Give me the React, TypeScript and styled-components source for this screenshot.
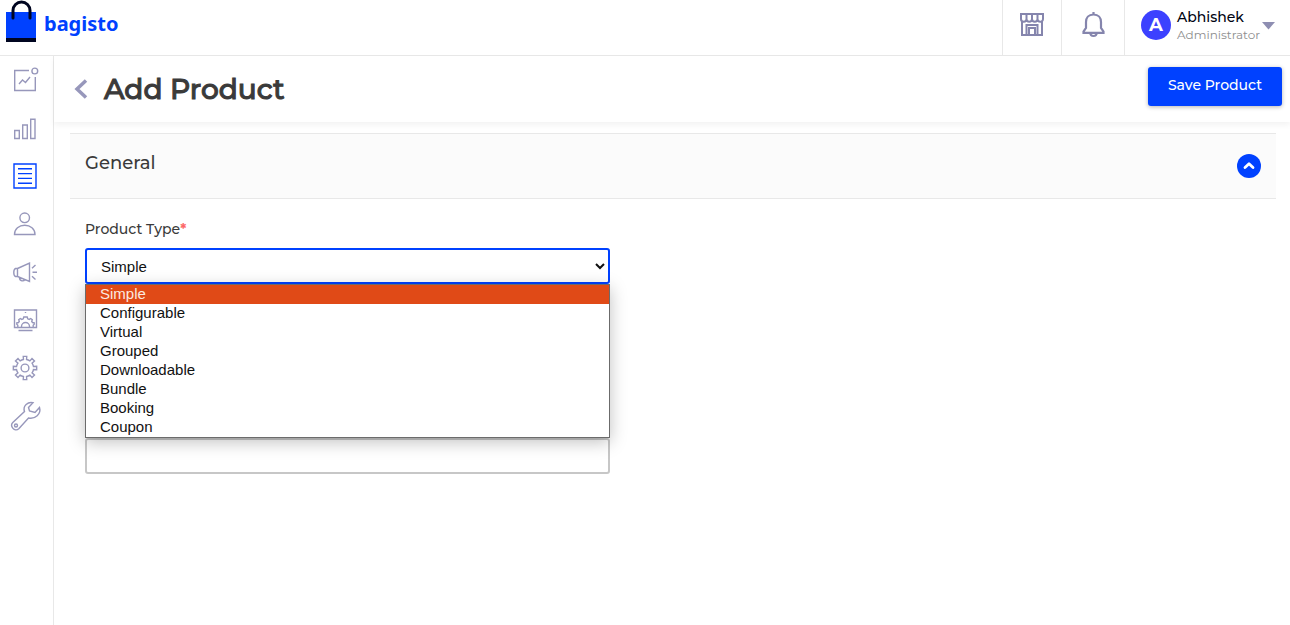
import React from "react";
import styled, { createGlobalStyle } from "styled-components";

const GlobalStyle = createGlobalStyle`
  *, *::before, *::after { box-sizing: border-box; }
  body {
    margin: 0;
    background: #fff;
    color: #3a3a3a;
    font-family: Montserrat, Inter, "Liberation Sans", sans-serif;
  }
  button { font-family: inherit; cursor: pointer; }
  a { text-decoration: none; color: inherit; }
`;

const Page = styled.div`
  display: flex;
  flex-direction: column;
  min-height: 100vh;
`;

const TopBar = styled.header`
  display: flex;
  justify-content: space-between;
  height: 56px;
  border-bottom: 1px solid #e8e8e8;
`;

const Brand = styled.a`
  display: flex;
  align-items: flex-start;
  gap: 8px;
  padding: 0 6px;
  color: #0041ff;
`;

const BrandName = styled.span`
  font-family: "Noto Sans", "Open Sans", sans-serif;
  font-size: 20px;
  font-weight: 700;
  line-height: 28px;
  padding-top: 10px;
`;

const TopActions = styled.div`
  display: flex;
`;

const TopButton = styled.button<{ $width: number }>`
  display: flex;
  justify-content: center;
  width: ${(p) => p.$width}px;
  padding: 11px 0 0;
  border: 0;
  border-left: 1px solid #e8e8e8;
  background: none;
  color: #8585ad;
`;

const Profile = styled.button`
  display: flex;
  align-items: flex-start;
  padding: 8px 15px 0 16px;
  border: 0;
  border-left: 1px solid #e8e8e8;
  background: none;
  text-align: left;
`;

const Avatar = styled.span`
  width: 30px;
  height: 30px;
  margin: 2px 6px 0 0;
  border-radius: 50%;
  background: #3c41ff;
  color: #fff;
  font-size: 18px;
  font-weight: 700;
  line-height: 30px;
  text-align: center;
`;

const ProfileText = styled.span`
  display: flex;
  flex-direction: column;
  width: 85px;
`;

const ProfileName = styled.span`
  color: #000311;
  font-size: 14px;
  font-weight: 500;
  line-height: 18px;
`;

const ProfileRole = styled.span`
  color: #8e8e8e;
  font-size: 12px;
  line-height: 18px;
`;

const Caret = styled.svg`
  margin-top: 14px;
`;

const Body = styled.div`
  display: flex;
  flex: 1;
`;

const SideNav = styled.nav`
  display: flex;
  flex: none;
  flex-direction: column;
  align-items: center;
  gap: 16px;
  width: 54px;
  padding: 8px 6px 0 0;
  border-right: 1px solid #e8e8e8;
`;

const NavLink = styled.a<{ $active?: boolean }>`
  display: flex;
  width: 32px;
  height: 32px;
  color: ${(p) => (p.$active ? "#0041ff" : "#9797bb")};
`;

const Content = styled.main`
  flex: 1;
  min-width: 0;
`;

const TitleBar = styled.div`
  display: flex;
  align-items: flex-start;
  justify-content: space-between;
  height: 66px;
  padding: 11px 8px 0 20px;
  box-shadow: 0 3px 6px rgba(0, 0, 0, 0.05);
`;

const TitleGroup = styled.div`
  display: flex;
  align-items: center;
  gap: 16px;
  height: 44px;
`;

const BackLink = styled.a`
  display: flex;
  color: #9797bb;
`;

const Title = styled.h1`
  margin: 0;
  font-size: 28px;
  font-weight: 500;
  line-height: 40px;
  -webkit-text-stroke: 1px currentColor;
`;

const PrimaryButton = styled.button`
  height: 39px;
  padding: 0 20px 2px;
  border: 0;
  border-radius: 3px;
  background: #0041ff;
  box-shadow: 0 1px 4px rgba(0, 0, 0, 0.3);
  color: #fff;
  font-size: 14px;
  font-weight: 500;
  line-height: 37px;
`;

const Panel = styled.section`
  margin: 11px 14px 0 16px;
`;

const PanelHeader = styled.div`
  display: flex;
  align-items: center;
  justify-content: space-between;
  height: 66px;
  padding: 0 15px;
  border: solid #e8e8e8;
  border-width: 1px 0;
  background: #fbfbfb;
`;

const PanelTitle = styled.h2`
  margin: 0;
  padding-bottom: 6px;
  font-size: 18px;
  font-weight: 500;
  line-height: 24px;
`;

const ToggleButton = styled.button`
  display: flex;
  width: 24px;
  height: 24px;
  padding: 0;
  border: 0;
  border-radius: 50%;
  background: #0041ff;
`;

const Form = styled.form`
  display: flex;
  flex-direction: column;
  gap: 154px;
  max-width: 555px;
  padding: 20px 15px;
`;

const Field = styled.div`
  display: flex;
  flex-direction: column;
  position: relative;
`;

const Label = styled.label`
  margin-bottom: 9px;
  font-size: 14px;
  font-weight: 500;
  line-height: 20px;
`;

const Required = styled.span`
  color: #fc6868;
  font-weight: 700;
`;

const Select = styled.select`
  width: 100%;
  height: 36px;
  padding: 0 10px;
  border: 2px solid #0041ff;
  border-radius: 3px;
  outline: 0;
  background: #fff;
  color: #111;
  font-family: "Liberation Sans", Arial, sans-serif;
  font-size: 15px;
`;

const TextInput = styled.input`
  width: 100%;
  height: 36px;
  padding: 0 10px;
  border: 2px solid #c7c7c7;
  border-radius: 3px;
  font-family: "Liberation Sans", Arial, sans-serif;
  font-size: 15px;
`;

const Options = styled.ul`
  position: absolute;
  z-index: 1;
  top: 100%;
  left: 0;
  right: 0;
  margin: 0;
  padding: 0;
  border: 1px solid #6b6b6b;
  background: #fff;
  box-shadow: 0 4px 16px rgba(0, 0, 0, 0.25);
  list-style: none;
`;

const Option = styled.li<{ $selected: boolean }>`
  padding: 0 14px 2px;
  background: ${(p) => (p.$selected ? "#e04a17" : "#fff")};
  color: ${(p) => (p.$selected ? "#fbe9e0" : "#111")};
  font-family: "Liberation Sans", Arial, sans-serif;
  font-size: 15px;
  line-height: 17px;
`;

const LineIcon = styled.svg<{ $weight?: number }>`
  display: block;
  fill: none;
  stroke: currentColor;
  stroke-width: ${(p) => p.$weight ?? 1.4};
`;

const gear = (cx: number, cy: number, outer: number, inner: number, teeth: number) => {
  const step = (Math.PI * 2) / teeth;
  const at = (r: number, a: number) =>
    `${(cx + r * Math.cos(a)).toFixed(2)} ${(cy + r * Math.sin(a)).toFixed(2)}`;
  let d = "";
  for (let i = 0; i < teeth; i++) {
    const a = i * step - Math.PI / 2;
    d += `${i ? "L" : "M"}${at(inner, a - step * 0.23)}L${at(outer, a - step * 0.19)}`;
    d += `L${at(outer, a + step * 0.19)}L${at(inner, a + step * 0.23)}`;
    d += `A${inner} ${inner} 0 0 1 ${at(inner, a + step * 0.77)}`;
  }
  return `${d}Z`;
};

const navItems = [
  {
    name: "Dashboard",
    art: (
      <>
        <path d="M21 6.500H6.700V26.500H27.300V13" />
        <circle cx="26.800" cy="7" r="2.900" />
        <path d="M11 20l3.500-4 3 2.500L22 13" />
      </>
    ),
  },
  {
    name: "Sales",
    art: <path d="M6.700 18.500h4.600v8H6.700zM14.700 13h4.600v13.500h-4.600zM22.700 7.200h4.300v19.300h-4.300z" />,
  },
  {
    name: "Catalog",
    active: true,
    art: (
      <>
        <path d="M6 4H28V28H6z" />
        <path d="M10 8.800H24M10 13.600H24M10 18.400H24M10 23.200H24" />
      </>
    ),
  },
  {
    name: "Customers",
    art: (
      <>
        <circle cx="16.700" cy="9.800" r="4.800" />
        <path d="M6.500 26.500C6.500 21 11 17.300 16.700 17.300S27 21 27 26.500z" />
      </>
    ),
  },
  {
    name: "Marketing",
    art: (
      <path d="M9.500 12.500L21.500 7V25.500L9.500 20.500zM9.500 12.500H7.500C5.200 13.500 5.200 19.500 7.500 20.500H9.500M11.500 21.500C11.500 25.500 16 25.500 16.500 23.500M24.500 16.300H29M24 12.300L27.500 9M24 20.300L27.500 23.500" />
    ),
  },
  {
    name: "CMS",
    art: (
      <>
        <path d="M9.500 23.500H6.500V6H28.500V23.500H25.500M10.500 26.500H24.500M17.500 8v1" />
        <path d="M9.800 23.500v-2.200l-1-1 0-1.500 1.700-.3.800-1.200-.6-1.600 1.600-1.200 1.500.9 1.500-.6.500-1.800h3.400l.5 1.800 1.500.6 1.500-.9 1.600 1.200-.6 1.600.8 1.200 1.700.3v1.500l-1 1v2.200zM13.500 23.500v-1a4 4 0 0 1 8 0v1" />
      </>
    ),
  },
  {
    name: "Settings",
    art: (
      <>
        <path d={gear(17, 16, 11.8, 8.600, 8)} />
        <circle cx="17" cy="16" r="3.900" />
      </>
    ),
  },
  {
    name: "Configure",
    art: (
      <>
        <path d="M25 2.700C20 1.500 14.500 5.500 16.500 11.500L4.800 22.600C1.500 26 6.500 32.500 10.800 28.700L20.500 18C27 19.500 33.500 14 31.500 7.500L27 12.500 21.500 11 20.500 7.500z" />
        <circle cx="8" cy="25.500" r="1.500" />
      </>
    ),
  },
];

const productTypes = [
  "Simple",
  "Configurable",
  "Virtual",
  "Grouped",
  "Downloadable",
  "Bundle",
  "Booking",
  "Coupon",
];

export default function App() {
  const [type, setType] = React.useState("Simple");

  return (
    <Page>
      <GlobalStyle />
      <TopBar>
        <Brand href="#">
          <svg width="30" height="42" viewBox="0 0 30 42" aria-hidden="true">
            <path fill="#0041ff" d="M0 12h30v26H0z" />
            <path fill="#000520" d="M0 38h30v4H0z" />
            <path
              d="M7 18V10.500a8.500 8.500 0 0 1 17 0v7.500"
              fill="none"
              stroke="#000520"
              strokeWidth="3"
              strokeLinecap="round"
            />
          </svg>
          <BrandName>bagisto</BrandName>
        </Brand>
        <TopActions>
          <TopButton $width={59} aria-label="Visit shop">
            <LineIcon $weight={2} width="26" height="28" viewBox="0 0 26 28">
              <path d="M2 3H24V8a2.700 2.700 0 0 1-5.500 0 2.700 2.700 0 0 1-5.500 0 2.700 2.700 0 0 1-5.500 0A2.700 2.700 0 0 1 2 8zM7.500 3v5M13 3v5M18.500 3v5M3 10.500V24H23V10.500M7.500 24V14H18.500V24M10 24V17H16V24" />
            </LineIcon>
          </TopButton>
          <TopButton $width={63} aria-label="Notifications">
            <LineIcon $weight={2.2} width="24" height="28" viewBox="0 0 24 28">
              <path d="M12.500 1v3M12.500 3.500C7.500 3.500 5 7 5 11V17L2.500 20.500V21.800H22.500V20.500L20 17V11C20 7 17.500 3.500 12.500 3.500zM9.300 22C9.500 26 15.500 26 15.700 22" />
            </LineIcon>
          </TopButton>
          <Profile>
            <Avatar>A</Avatar>
            <ProfileText>
              <ProfileName>Abhishek</ProfileName>
              <ProfileRole>Administrator</ProfileRole>
            </ProfileText>
            <Caret width="13" height="8" viewBox="0 0 13 8" aria-hidden="true">
              <path d="M0 0h13L6.500 7.500z" fill="#8e8eb2" />
            </Caret>
          </Profile>
        </TopActions>
      </TopBar>
      <Body>
        <SideNav>
          {navItems.map((item) => (
            <NavLink key={item.name} href="#" aria-label={item.name} $active={item.active}>
              <LineIcon width="32" height="32" viewBox="0 0 32 32" overflow="visible">
                {item.art}
              </LineIcon>
            </NavLink>
          ))}
        </SideNav>
        <Content>
          <TitleBar>
            <TitleGroup>
              <BackLink href="#" aria-label="Back">
                <svg width="14" height="20" viewBox="0 0 14 20" aria-hidden="true">
                  <path d="M12 1.500L3 10l9 8.500" fill="none" stroke="currentColor" strokeWidth="3.500" />
                </svg>
              </BackLink>
              <Title>Add Product</Title>
            </TitleGroup>
            <PrimaryButton type="submit" form="product-form">
              Save Product
            </PrimaryButton>
          </TitleBar>
          <Panel>
            <PanelHeader>
              <PanelTitle>General</PanelTitle>
              <ToggleButton aria-label="Collapse">
                <svg width="24" height="24" viewBox="0 0 24 24" aria-hidden="true">
                  <path
                    d="M8 13.500l4-3.700 4 3.700"
                    fill="none"
                    stroke="#fff"
                    strokeWidth="2.800"
                    strokeLinecap="round"
                    strokeLinejoin="round"
                  />
                </svg>
              </ToggleButton>
            </PanelHeader>
            <Form id="product-form">
              <Field>
                <Label htmlFor="type">
                  Product Type<Required>*</Required>
                </Label>
                <Select id="type" value={type} onChange={(e) => setType(e.target.value)}>
                  {productTypes.map((name) => (
                    <option key={name}>{name}</option>
                  ))}
                </Select>
                <Options>
                  {productTypes.map((name) => (
                    <Option key={name} $selected={name === type} onClick={() => setType(name)}>
                      {name}
                    </Option>
                  ))}
                </Options>
              </Field>
              <TextInput name="sku" aria-label="SKU" />
            </Form>
          </Panel>
        </Content>
      </Body>
    </Page>
  );
}
